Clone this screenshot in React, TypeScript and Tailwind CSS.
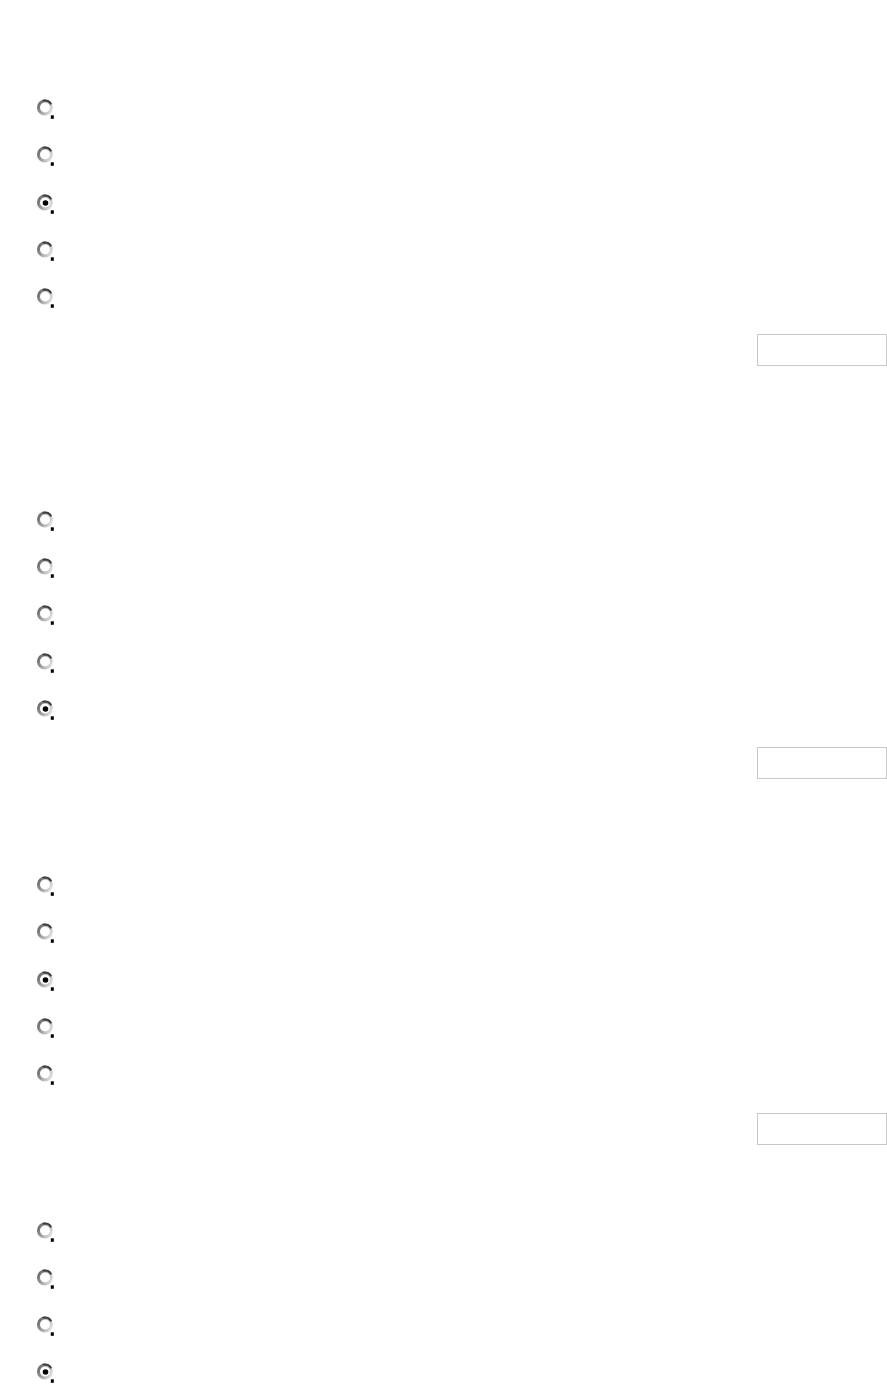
import React from 'react'

const Radio = ({ checked }: { checked?: boolean }) => {
  return (
    <svg width="17" height="17" viewBox="0 0 17 17" className="block overflow-visible shrink-0">
      <defs>
        <linearGradient id="ring" x1="0" y1="0.3" x2="1" y2="0.8">
          <stop offset="0" stopColor="#6e6e6e" />
          <stop offset="0.5" stopColor="#ababab" />
          <stop offset="1" stopColor="#e2e2e2" />
        </linearGradient>
      </defs>
      <circle cx="8" cy="8.5" r="6.5" fill="#fff" stroke="url(#ring)" strokeWidth="3" />
      <path d="M5.8 1.8 A6.7 6.7 0 0 1 14.2 5.4" fill="none" stroke="#3c3c3c" strokeWidth="2" />
      <rect x="13.8" y="16.3" width="3" height="3.5" fill="#000" />
      {checked && <circle cx="8.5" cy="9" r="2.8" fill="#000" />}
    </svg>
  )
}

const Group = ({ count, selected }: { count: number, selected: number }) => {
  return (
    <div className='flex flex-col'>
      {Array.from({ length: count }).map((_, i) => (
        <label key={i} className='h-[47.3px] flex items-center pl-[37px]'>
          <Radio checked={i === selected} />
        </label>
      ))}
    </div>
  )
}

const Submit = () => (
  <div className='flex justify-end'>
    <button type="button" className='w-[130px] h-[32px] border border-[#c8c8c8] bg-white'></button>
  </div>
)

const App = () => {
  return (
    <div className='w-[887px] min-h-[1390px] bg-white overflow-hidden' style={{ fontFamily: '"Liberation Sans", sans-serif' }}>
      <div className='pt-[84px]'>
        <Group count={5} selected={2} />
        <div className='mt-[14px]'><Submit /></div>
      </div>
      <div className='mt-[129px]'>
        <Group count={5} selected={4} />
        <div className='mt-[15px]'><Submit /></div>
      </div>
      <div className='mt-[82px]'>
        <Group count={5} selected={2} />
        <div className='mt-[16px]'><Submit /></div>
      </div>
      <div className='mt-[61px]'>
        <Group count={4} selected={3} />
      </div>
    </div>
  )
}

export default App
